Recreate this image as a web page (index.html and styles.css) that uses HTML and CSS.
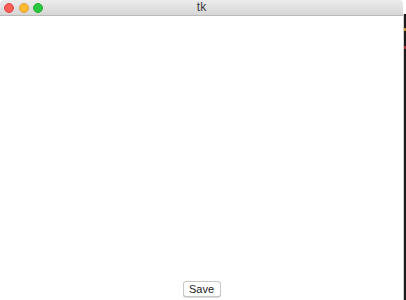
FILE: index.html
```html
<!DOCTYPE html>
<html>
<head>
<meta charset="utf-8">
<link rel="stylesheet" href="styles.css">
</head>
<body>
<div class="screen">
  <div class="window">
    <div class="titlebar">
      <div class="lights">
        <span class="light red"></span>
        <span class="light yellow"></span>
        <span class="light green"></span>
      </div>
      <div class="title">tk</div>
    </div>
    <div class="content">
      <div class="canvas"></div>
      <div class="actions">
        <button class="btn">Save</button>
      </div>
    </div>
  </div>
  <div class="desktop">
    <span class="tick orange"></span>
    <span class="tick red"></span>
  </div>
</div>
</body>
</html>
```
FILE: styles.css
```css
html, body {
  margin: 0;
  padding: 0;
  background: #ffffff;
}
.screen {
  display: flex;
  width: 406px;
  height: 300px;
  overflow: hidden;
}
.window {
  width: 403px;
  flex-shrink: 0;
  height: 300px;
  display: flex;
  flex-direction: column;
  background: #ffffff;
}
.titlebar {
  height: 16px;
  box-sizing: border-box;
  background: linear-gradient(#ececec, #d6d6d6);
  border-bottom: 1px solid #b9b9b9;
  border-radius: 4px 4px 0 0;
  position: relative;
  display: flex;
  align-items: center;
  justify-content: center;
}
.lights {
  position: absolute;
  left: 4px;
  top: 3px;
  display: flex;
  gap: 4.5px;
}
.light {
  width: 10px;
  height: 10px;
  border-radius: 50%;
  display: block;
  box-sizing: border-box;
}
.light.red { background: #fc5f57; border: 0.5px solid #df4744; }
.light.yellow { background: #fdbc2e; border: 0.5px solid #de9f34; }
.light.green { background: #28c840; border: 0.5px solid #27aa35; }
.title {
  font-family: "Liberation Sans", Arial, sans-serif;
  font-size: 12px;
  color: #3c3c3c;
  line-height: 15px;
}
.content {
  flex: 1;
  display: flex;
  flex-direction: column;
}
.canvas {
  flex: 1;
}
.actions {
  display: flex;
  justify-content: center;
  padding: 0 0 3px 0;
}
.btn {
  width: 38px;
  height: 16px;
  box-sizing: border-box;
  border: 1px solid #c8c8c8;
  border-radius: 3px;
  background: #ffffff;
  font-family: "Liberation Sans", Arial, sans-serif;
  font-size: 11px;
  color: #222;
  padding: 0;
  line-height: 14px;
  box-shadow: 0 0.5px 0 #b5b5b5;
}
.desktop {
  width: 2px;
  flex-shrink: 0;
  margin-top: 14px;
  background: #1a1a1a;
  border-left: 1px solid #d0d0d0;
  position: relative;
}
.tick {
  position: absolute;
  left: 0;
  width: 2px;
  height: 3px;
}
.tick.orange { top: 14px; background: #c8902a; }
.tick.red { top: 32px; background: #a8302a; }
```
